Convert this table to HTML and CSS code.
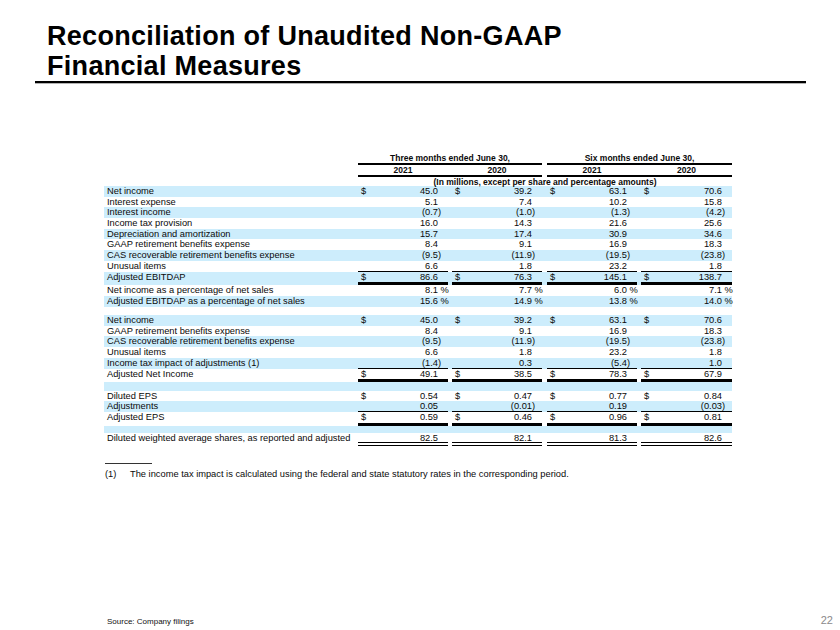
FILE: index.html
```html
<!DOCTYPE html>
<html lang="en">
<head>
<meta charset="utf-8">
<title>Reconciliation of Unaudited Non-GAAP Financial Measures</title>
<link rel="stylesheet" href="styles.css">
</head>
<body>
<div class="page">
  <header class="title">
    <h1>Reconciliation of Unaudited Non-GAAP<br>Financial Measures</h1>
  </header>

  <section class="table">
    <div class="hrow ha">
      <div class="lbl"></div>
      <div class="grp g1">Three months ended June 30,</div>
      <div class="grp g2">Six months ended June 30,</div>
    </div>
    <div class="hrow hb">
      <div class="lbl"></div>
      <div class="grp g1"><span class="yr">2021</span><span class="yr yr2">2020</span></div>
      <div class="grp g2"><span class="yr">2021</span><span class="yr yr2">2020</span></div>
    </div>
    <div class="hrow hc">
      <div class="lbl"></div>
      <div class="units">(In millions, except per share and percentage amounts)</div>
    </div>

    <div class="row blue">
      <div class="lbl">Net income</div>
      <div class="c c1"><span class="cur">$</span><span class="n">45.0</span><span class="sx"></span></div>
      <div class="c c2"><span class="cur">$</span><span class="n">39.2</span><span class="sx"></span></div>
      <div class="c c3"><span class="cur">$</span><span class="n">63.1</span><span class="sx"></span></div>
      <div class="c c4"><span class="cur">$</span><span class="n">70.6</span><span class="sx"></span></div>
    </div>
    <div class="row">
      <div class="lbl">Interest expense</div>
      <div class="c c1"><span class="n">5.1</span><span class="sx"></span></div>
      <div class="c c2"><span class="n">7.4</span><span class="sx"></span></div>
      <div class="c c3"><span class="n">10.2</span><span class="sx"></span></div>
      <div class="c c4"><span class="n">15.8</span><span class="sx"></span></div>
    </div>
    <div class="row blue">
      <div class="lbl">Interest income</div>
      <div class="c c1"><span class="n">(0.7</span><span class="sx">)</span></div>
      <div class="c c2"><span class="n">(1.0</span><span class="sx">)</span></div>
      <div class="c c3"><span class="n">(1.3</span><span class="sx">)</span></div>
      <div class="c c4"><span class="n">(4.2</span><span class="sx">)</span></div>
    </div>
    <div class="row">
      <div class="lbl">Income tax provision</div>
      <div class="c c1"><span class="n">16.0</span><span class="sx"></span></div>
      <div class="c c2"><span class="n">14.3</span><span class="sx"></span></div>
      <div class="c c3"><span class="n">21.6</span><span class="sx"></span></div>
      <div class="c c4"><span class="n">25.6</span><span class="sx"></span></div>
    </div>
    <div class="row blue">
      <div class="lbl">Depreciation and amortization</div>
      <div class="c c1"><span class="n">15.7</span><span class="sx"></span></div>
      <div class="c c2"><span class="n">17.4</span><span class="sx"></span></div>
      <div class="c c3"><span class="n">30.9</span><span class="sx"></span></div>
      <div class="c c4"><span class="n">34.6</span><span class="sx"></span></div>
    </div>
    <div class="row">
      <div class="lbl">GAAP retirement benefits expense</div>
      <div class="c c1"><span class="n">8.4</span><span class="sx"></span></div>
      <div class="c c2"><span class="n">9.1</span><span class="sx"></span></div>
      <div class="c c3"><span class="n">16.9</span><span class="sx"></span></div>
      <div class="c c4"><span class="n">18.3</span><span class="sx"></span></div>
    </div>
    <div class="row blue">
      <div class="lbl">CAS recoverable retirement benefits expense</div>
      <div class="c c1"><span class="n">(9.5</span><span class="sx">)</span></div>
      <div class="c c2"><span class="n">(11.9</span><span class="sx">)</span></div>
      <div class="c c3"><span class="n">(19.5</span><span class="sx">)</span></div>
      <div class="c c4"><span class="n">(23.8</span><span class="sx">)</span></div>
    </div>
    <div class="row line">
      <div class="lbl">Unusual items</div>
      <div class="c c1"><span class="n">6.6</span><span class="sx"></span></div>
      <div class="c c2"><span class="n">1.8</span><span class="sx"></span></div>
      <div class="c c3"><span class="n">23.2</span><span class="sx"></span></div>
      <div class="c c4"><span class="n">1.8</span><span class="sx"></span></div>
    </div>
    <div class="row blue thick">
      <div class="lbl">Adjusted EBITDAP</div>
      <div class="c c1"><span class="cur">$</span><span class="n">86.6</span><span class="sx"></span></div>
      <div class="c c2"><span class="cur">$</span><span class="n">76.3</span><span class="sx"></span></div>
      <div class="c c3"><span class="cur">$</span><span class="n">145.1</span><span class="sx"></span></div>
      <div class="c c4"><span class="cur">$</span><span class="n">138.7</span><span class="sx"></span></div>
    </div>
    <div class="row">
      <div class="lbl">Net income as a percentage of net sales</div>
      <div class="c c1"><span class="n">8.1</span><span class="sx">&nbsp;%</span></div>
      <div class="c c2"><span class="n">7.7</span><span class="sx">&nbsp;%</span></div>
      <div class="c c3"><span class="n">6.0</span><span class="sx">&nbsp;%</span></div>
      <div class="c c4"><span class="n">7.1</span><span class="sx">&nbsp;%</span></div>
    </div>
    <div class="row blue">
      <div class="lbl">Adjusted EBITDAP as a percentage of net sales</div>
      <div class="c c1"><span class="n">15.6</span><span class="sx">&nbsp;%</span></div>
      <div class="c c2"><span class="n">14.9</span><span class="sx">&nbsp;%</span></div>
      <div class="c c3"><span class="n">13.8</span><span class="sx">&nbsp;%</span></div>
      <div class="c c4"><span class="n">14.0</span><span class="sx">&nbsp;%</span></div>
    </div>
    <div class="gap"></div>

    <div class="row blue">
      <div class="lbl">Net income</div>
      <div class="c c1"><span class="cur">$</span><span class="n">45.0</span><span class="sx"></span></div>
      <div class="c c2"><span class="cur">$</span><span class="n">39.2</span><span class="sx"></span></div>
      <div class="c c3"><span class="cur">$</span><span class="n">63.1</span><span class="sx"></span></div>
      <div class="c c4"><span class="cur">$</span><span class="n">70.6</span><span class="sx"></span></div>
    </div>
    <div class="row">
      <div class="lbl">GAAP retirement benefits expense</div>
      <div class="c c1"><span class="n">8.4</span><span class="sx"></span></div>
      <div class="c c2"><span class="n">9.1</span><span class="sx"></span></div>
      <div class="c c3"><span class="n">16.9</span><span class="sx"></span></div>
      <div class="c c4"><span class="n">18.3</span><span class="sx"></span></div>
    </div>
    <div class="row blue">
      <div class="lbl">CAS recoverable retirement benefits expense</div>
      <div class="c c1"><span class="n">(9.5</span><span class="sx">)</span></div>
      <div class="c c2"><span class="n">(11.9</span><span class="sx">)</span></div>
      <div class="c c3"><span class="n">(19.5</span><span class="sx">)</span></div>
      <div class="c c4"><span class="n">(23.8</span><span class="sx">)</span></div>
    </div>
    <div class="row">
      <div class="lbl">Unusual items</div>
      <div class="c c1"><span class="n">6.6</span><span class="sx"></span></div>
      <div class="c c2"><span class="n">1.8</span><span class="sx"></span></div>
      <div class="c c3"><span class="n">23.2</span><span class="sx"></span></div>
      <div class="c c4"><span class="n">1.8</span><span class="sx"></span></div>
    </div>
    <div class="row blue line">
      <div class="lbl">Income tax impact of adjustments (1)</div>
      <div class="c c1"><span class="n">(1.4</span><span class="sx">)</span></div>
      <div class="c c2"><span class="n">0.3</span><span class="sx"></span></div>
      <div class="c c3"><span class="n">(5.4</span><span class="sx">)</span></div>
      <div class="c c4"><span class="n">1.0</span><span class="sx"></span></div>
    </div>
    <div class="row thick">
      <div class="lbl">Adjusted Net Income</div>
      <div class="c c1"><span class="cur">$</span><span class="n">49.1</span><span class="sx"></span></div>
      <div class="c c2"><span class="cur">$</span><span class="n">38.5</span><span class="sx"></span></div>
      <div class="c c3"><span class="cur">$</span><span class="n">78.3</span><span class="sx"></span></div>
      <div class="c c4"><span class="cur">$</span><span class="n">67.9</span><span class="sx"></span></div>
    </div>
    <div class="gap blue"></div>

    <div class="row">
      <div class="lbl">Diluted EPS</div>
      <div class="c c1"><span class="cur">$</span><span class="n">0.54</span><span class="sx"></span></div>
      <div class="c c2"><span class="cur">$</span><span class="n">0.47</span><span class="sx"></span></div>
      <div class="c c3"><span class="cur">$</span><span class="n">0.77</span><span class="sx"></span></div>
      <div class="c c4"><span class="cur">$</span><span class="n">0.84</span><span class="sx"></span></div>
    </div>
    <div class="row blue line">
      <div class="lbl">Adjustments</div>
      <div class="c c1"><span class="n">0.05</span><span class="sx"></span></div>
      <div class="c c2"><span class="n">(0.01</span><span class="sx">)</span></div>
      <div class="c c3"><span class="n">0.19</span><span class="sx"></span></div>
      <div class="c c4"><span class="n">(0.03</span><span class="sx">)</span></div>
    </div>
    <div class="row thick">
      <div class="lbl">Adjusted EPS</div>
      <div class="c c1"><span class="cur">$</span><span class="n">0.59</span><span class="sx"></span></div>
      <div class="c c2"><span class="cur">$</span><span class="n">0.46</span><span class="sx"></span></div>
      <div class="c c3"><span class="cur">$</span><span class="n">0.96</span><span class="sx"></span></div>
      <div class="c c4"><span class="cur">$</span><span class="n">0.81</span><span class="sx"></span></div>
    </div>
    <div class="gap blue gap2"></div>
    <div class="row dbl">
      <div class="lbl">Diluted weighted average shares, as reported and adjusted</div>
      <div class="c c1"><span class="n">82.5</span><span class="sx"></span></div>
      <div class="c c2"><span class="n">82.1</span><span class="sx"></span></div>
      <div class="c c3"><span class="n">81.3</span><span class="sx"></span></div>
      <div class="c c4"><span class="n">82.6</span><span class="sx"></span></div>
    </div>
  </section>

  <section class="notes">
    <div class="note-rule"></div>
    <p class="note"><span class="note-num">(1)</span><span>The income tax impact is calculated using the federal and state statutory rates in the corresponding period.</span></p>
  </section>

  <footer class="footer">
    <span class="source">Source: Company filings</span>
    <span class="pnum">22</span>
  </footer>
</div>
</body>
</html>
```

FILE: styles.css
```css
* { box-sizing: border-box; }

html, body {
  margin: 0;
  padding: 0;
  background: #fff;
}

body {
  font-family: "Liberation Sans", Arial, sans-serif;
  color: #000;
}

.page {
  width: 840px;
  height: 630px;
  display: flex;
  flex-direction: column;
}

/* Title */
.title {
  margin: 21px 0 0 35px;
  width: 771px;
  padding-left: 12px;
  border-bottom: 2px solid #000;
  box-shadow: 0 1px 0 rgba(0, 0, 0, 0.3);
}

.title h1 {
  margin: 0;
  font-size: 27px;
  line-height: 30px;
  font-weight: 700;
  letter-spacing: 0.3px;
  color: #000;
}

/* Table */
.table {
  margin: 69px 0 0 104px;
  width: 628px;
  font-size: 9.3px;
  color: #0a0a0a;
}

.hrow {
  display: flex;
  font-weight: 700;
  font-size: 8.5px;
}

.lbl {
  width: 254px;
  flex: none;
  padding-left: 3px;
  white-space: nowrap;
}

.grp {
  display: flex;
  justify-content: center;
  border-bottom: 2px solid #000;
}

.grp.g1 { width: 184px; }
.grp.g2 { width: 185px; margin-left: 5px; }

.ha { height: 13px; line-height: 12px; }
.ha .grp { height: 13px; }

.hb { height: 12px; line-height: 10px; }
.hb .grp { height: 12px; justify-content: space-between; }

.yr {
  width: 90px;
  text-align: center;
}

.g2 .yr2 { width: 91px; }

.hc { height: 9px; line-height: 10px; }

.units {
  width: 374px;
  text-align: center;
}

.row {
  display: flex;
  height: 10.7px;
  line-height: 10.7px;
}

.blue { background: #cdedfc; }

.c {
  display: flex;
  flex: none;
  width: 90px;
  padding-left: 3px;
  white-space: nowrap;
}

.c2 { margin-left: 4px; }
.c3 { margin-left: 5px; }
.c4 { margin-left: 4px; width: 91px; }

.cur { flex: none; }

.n {
  flex: 1;
  text-align: right;
}

.sx {
  flex: none;
  width: 10px;
  white-space: pre;
}

.line .c { border-bottom: 1px solid #000; }

.thick { height: 13.7px; }
.thick .c { border-bottom: 3px solid #000; }

.dbl { height: 13.5px; line-height: 10px; }
.dbl .c { border-bottom: 4px double #000; }

.gap { height: 8.5px; }
.gap2 { height: 7px; }

/* Footnote */
.notes {
  margin: 17px 0 0 105px;
}

.note-rule {
  width: 47px;
  border-top: 1px solid #333;
}

.note {
  margin: 5px 0 0 0;
  display: flex;
  font-size: 9.3px;
  line-height: 11px;
  color: #0a0a0a;
}

.note-num {
  width: 25px;
  flex: none;
}

/* Footer */
.footer {
  margin-top: auto;
  display: flex;
  justify-content: space-between;
  align-items: baseline;
  padding: 0 7px 3px 107px;
}

.source {
  font-size: 8px;
  line-height: 10px;
  color: #111;
}

.pnum {
  font-size: 11px;
  line-height: 10px;
  color: #8a8a8a;
}
```
